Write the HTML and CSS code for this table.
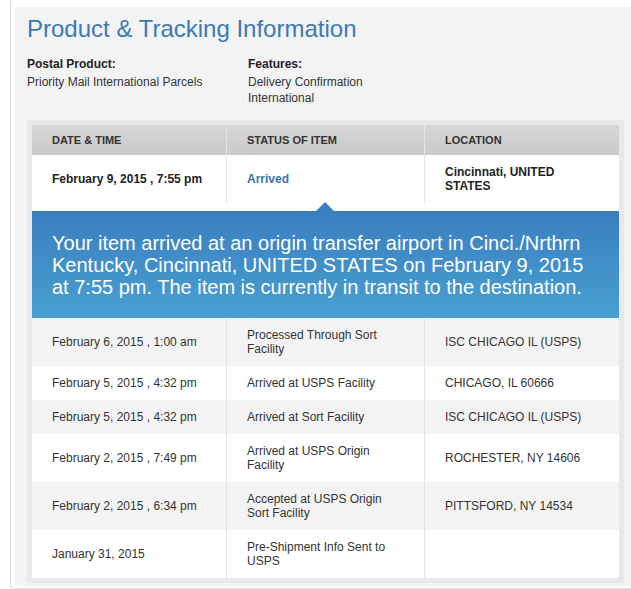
FILE: index.html
```html
<!DOCTYPE html>
<html>
<head>
<meta charset="utf-8">
<link rel="stylesheet" href="styles.css">
</head>
<body>
<div class="frame">
  <div class="panel">
    <h1 class="title">Product &amp; Tracking Information</h1>
    <div class="info">
      <div class="info-col info-col-1">
        <div class="label">Postal Product:</div>
        <div class="value">Priority Mail International Parcels</div>
      </div>
      <div class="info-col">
        <div class="label">Features:</div>
        <div class="value">Delivery Confirmation<br>International</div>
      </div>
    </div>
    <div class="table-wrap">
      <div class="row head">
        <div class="cell">DATE &amp; TIME</div>
        <div class="cell">STATUS OF ITEM</div>
        <div class="cell">LOCATION</div>
      </div>
      <div class="row current">
        <div class="cell strong">February 9, 2015 , 7:55 pm</div>
        <div class="cell strong status-blue">Arrived</div>
        <div class="cell strong">Cincinnati, UNITED<br>STATES</div>
      </div>
      <div class="tip-gap">
        <div class="tip">Your item arrived at an origin transfer airport in Cinci./Nrthrn Kentucky, Cincinnati, UNITED STATES on February 9, 2015 at 7:55 pm. The item is currently in transit to the destination.</div>
      </div>
      <div class="row tall alt">
        <div class="cell">February 6, 2015 , 1:00 am</div>
        <div class="cell">Processed Through Sort<br>Facility</div>
        <div class="cell">ISC CHICAGO IL (USPS)</div>
      </div>
      <div class="row">
        <div class="cell">February 5, 2015 , 4:32 pm</div>
        <div class="cell">Arrived at USPS Facility</div>
        <div class="cell">CHICAGO, IL 60666</div>
      </div>
      <div class="row alt">
        <div class="cell">February 5, 2015 , 4:32 pm</div>
        <div class="cell">Arrived at Sort Facility</div>
        <div class="cell">ISC CHICAGO IL (USPS)</div>
      </div>
      <div class="row tall">
        <div class="cell">February 2, 2015 , 7:49 pm</div>
        <div class="cell">Arrived at USPS Origin<br>Facility</div>
        <div class="cell">ROCHESTER, NY 14606</div>
      </div>
      <div class="row tall alt">
        <div class="cell">February 2, 2015 , 6:34 pm</div>
        <div class="cell">Accepted at USPS Origin<br>Sort Facility</div>
        <div class="cell">PITTSFORD, NY 14534</div>
      </div>
      <div class="row tall">
        <div class="cell">January 31, 2015</div>
        <div class="cell">Pre-Shipment Info Sent to<br>USPS</div>
        <div class="cell"></div>
      </div>
    </div>
  </div>
</div>
</body>
</html>
```

FILE: styles.css
```css
html, body {
  margin: 0;
  padding: 0;
  background: #ffffff;
}
body {
  font-family: "Liberation Sans", Arial, sans-serif;
  color: #333333;
  font-size: 12px;
}
.frame {
  margin-left: 10px;
  border-left: 1px solid #dedede;
  border-bottom: 1px solid #dedede;
  border-bottom-left-radius: 5px;
  padding: 7px 0 2px 3px;
}
.panel {
  background: #f3f3f4;
  border-radius: 5px 0 0 5px;
  padding: 8px 7px 3px 13px;
}
.title {
  margin: 0;
  font-weight: normal;
  font-size: 24px;
  line-height: 28px;
  color: #3d79b6;
}
.info {
  display: flex;
  margin-top: 13px;
}
.info-col-1 {
  width: 221px;
}
.label {
  font-weight: bold;
  line-height: 16px;
  margin-bottom: 2px;
  color: #222;
}
.value {
  line-height: 16px;
  color: #333;
}
.table-wrap {
  margin-top: 14px;
  border: 5px solid #e8e8e9;
  background: #ffffff;
}
.row {
  display: grid;
  grid-template-columns: 194px 198px 1fr;
  min-height: 34px;
  background: #ffffff;
}
.row.alt {
  background: #f3f3f3;
}
.row.tall, .row.current {
  min-height: 48px;
}
.cell {
  display: flex;
  align-items: center;
  padding: 0 8px 0 20px;
  line-height: 14px;
}
.cell + .cell {
  border-left: 1px solid #e3e3e3;
}
.row.head {
  min-height: 30px;
  background: linear-gradient(#d7d7d7, #cacaca);
}
.row.head .cell {
  font-size: 11px;
  font-weight: bold;
  color: #333;
}
.row.head .cell + .cell {
  border-left: 1px solid #e6e6e6;
}
.strong {
  font-weight: bold;
  color: #222;
}
.status-blue {
  color: #3a72ae;
}
.tip-gap {
  padding-top: 8px;
  background: #ffffff;
}
.tip {
  position: relative;
  background: linear-gradient(#3a7ec0, #48a0d1);
  color: #ffffff;
  font-size: 20px;
  line-height: 22px;
  padding: 21px 20px 20px 20px;
}
.tip::before {
  content: "";
  position: absolute;
  top: -9px;
  left: 284px;
  border-left: 9px solid transparent;
  border-right: 9px solid transparent;
  border-bottom: 9px solid #3a7ec0;
}
```
